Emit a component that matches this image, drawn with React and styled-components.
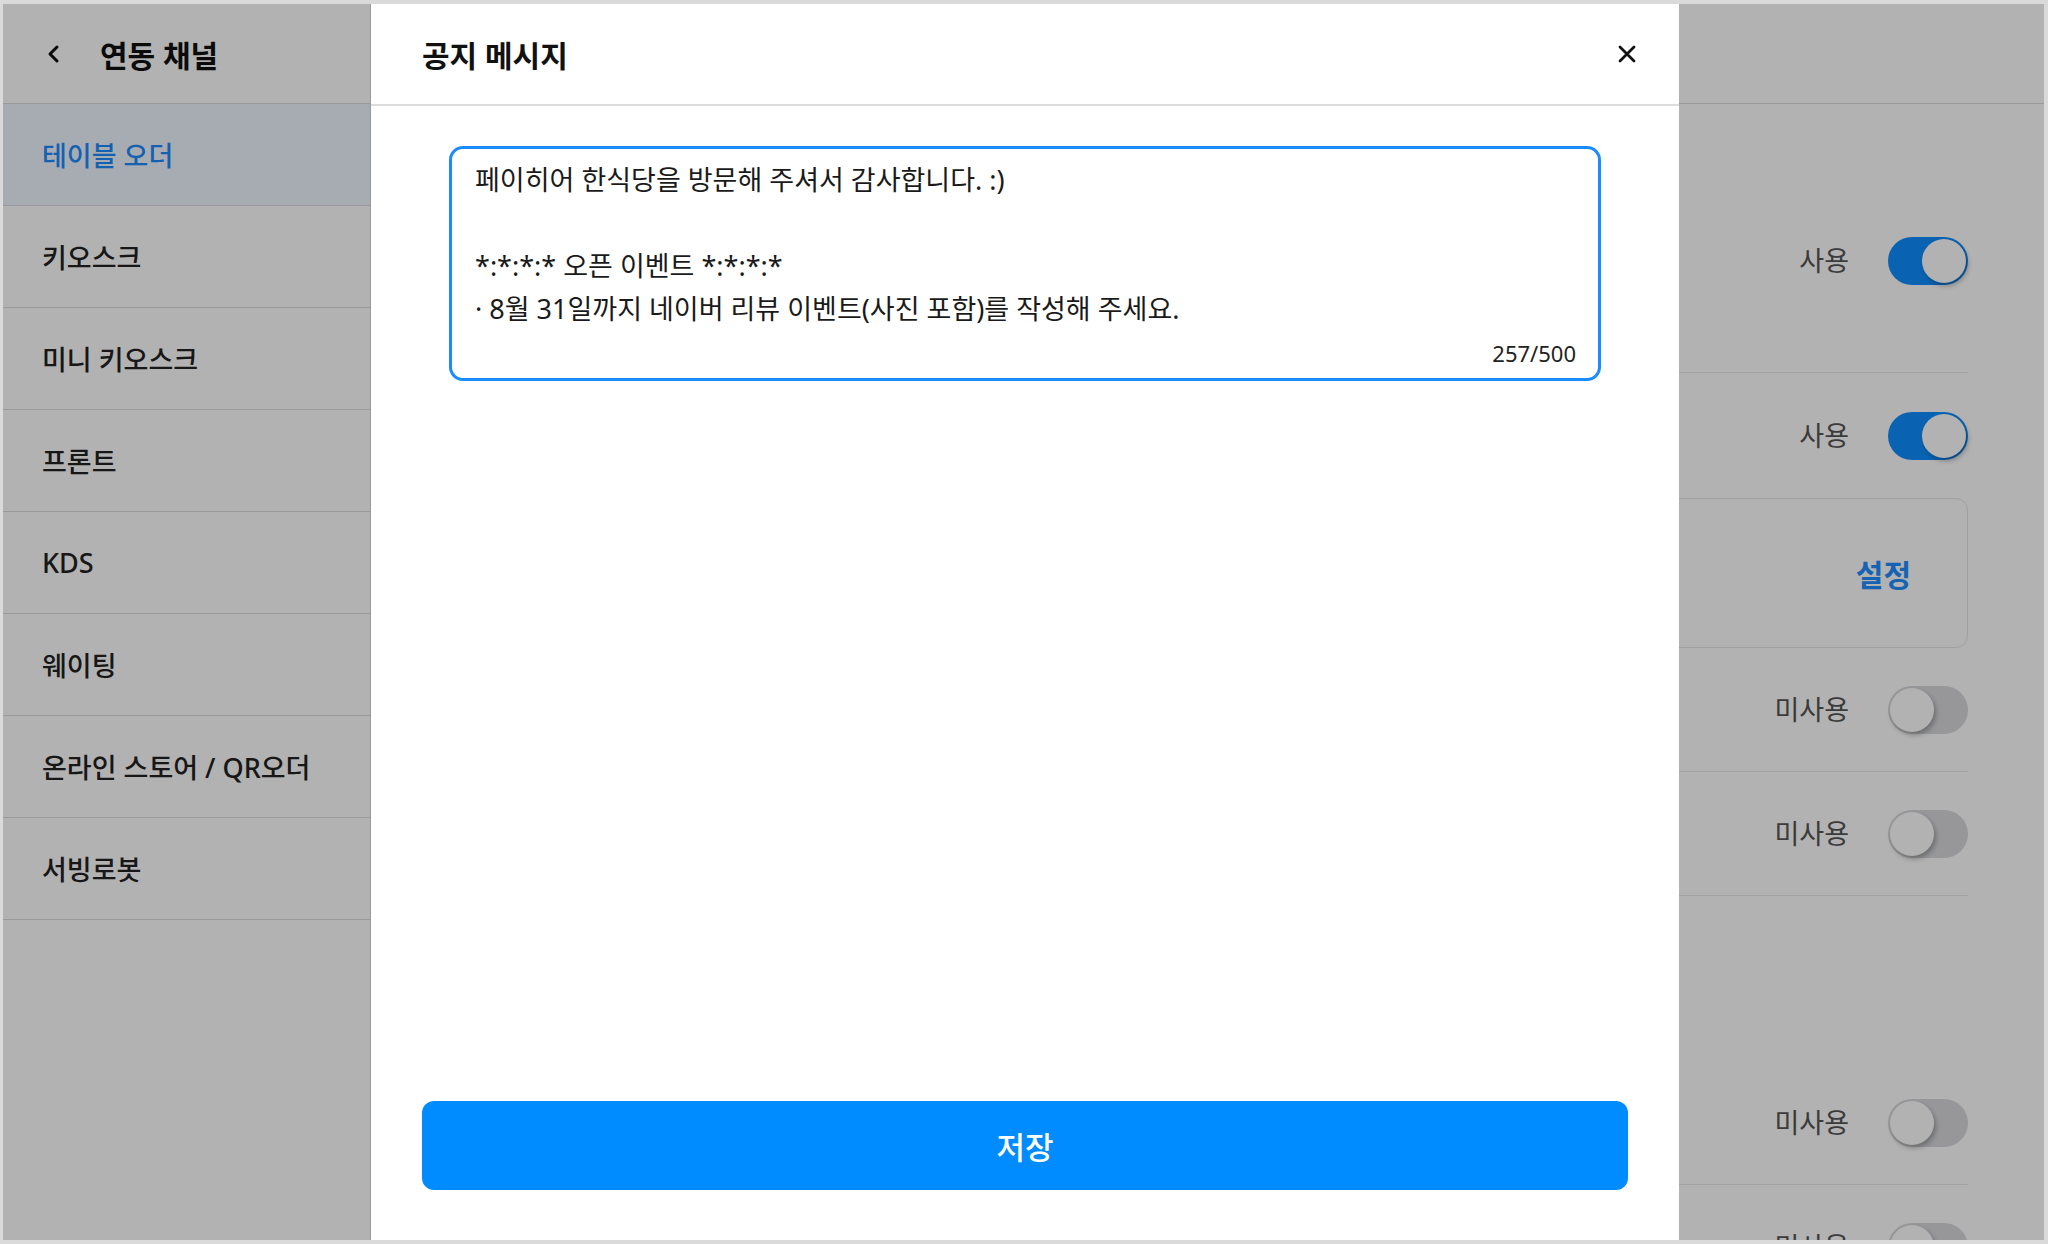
import React from "react";
import styled, { createGlobalStyle } from "styled-components";

const GlobalStyle = createGlobalStyle`
  html, body { margin: 0; padding: 0; }
  body {
    font-family: "Noto Sans", "Noto Sans CJK KR", sans-serif;
    color: #222;
  }
  * { box-sizing: border-box; }
`;

const Frame = styled.div`
  width: 2048px;
  height: 1244px;
  padding: 4px 4px 4px 3px;
  background: #dadada;
`;

const Screen = styled.div`
  position: relative;
  width: 100%;
  height: 100%;
  display: flex;
  background: #fff;
  overflow: hidden;
`;

/* ---------- Sidebar ---------- */
const Sidebar = styled.aside`
  width: 368px;
  flex-shrink: 0;
  display: flex;
  flex-direction: column;
  border-right: 1px solid #dbdbdb;
`;

const SideHeader = styled.div`
  height: 100px;
  display: flex;
  align-items: center;
  gap: 39px;
  padding-left: 42px;
  border-bottom: 1px solid #dbdbdb;
`;

const BackButton = styled.button`
  display: flex;
  align-items: center;
  padding: 0;
  border: 0;
  background: none;
  color: #111;
`;

const SideTitle = styled.h1`
  margin: 0;
  font-size: 30px;
  font-weight: 700;
  color: #111;
`;

const NavItem = styled.div`
  height: 102px;
  display: flex;
  align-items: center;
  padding-left: 39px;
  font-size: 27px;
  font-weight: 500;
  border-bottom: 1px solid #dbdbdb;
  background: ${(p) => (p.$active ? "#f0f7ff" : "#fff")};
  color: ${(p) => (p.$active ? "#1e8cff" : "#222")};
`;

/* ---------- Main page (behind modal) ---------- */
const Main = styled.main`
  flex: 1;
  display: flex;
  flex-direction: column;
  min-width: 0;
`;

const MainHeader = styled.div`
  height: 100px;
  flex-shrink: 0;
  border-bottom: 1px solid #dbdbdb;
`;

const Settings = styled.div`
  display: flex;
  flex-direction: column;
  padding: 0 76px;
`;

const Row = styled.div`
  height: ${(p) => p.$h}px;
  flex-shrink: 0;
  display: flex;
  justify-content: flex-end;
  align-items: ${(p) => (p.$top ? "flex-start" : "center")};
  padding-top: ${(p) => p.$top || 0}px;
  gap: 39px;
  border-bottom: ${(p) => (p.$line ? "1px solid #e8e8e8" : "none")};
`;

const SectionGap = styled.div`
  height: ${(p) => p.$h}px;
  flex-shrink: 0;
`;

const StatusLabel = styled.span`
  font-size: 27px;
  color: #555;
  line-height: 48px;
`;

const Track = styled.span`
  position: relative;
  width: 80px;
  height: 48px;
  border-radius: 24px;
  flex-shrink: 0;
  background: ${(p) => (p.$on ? "#0e8fff" : "#d8d9dd")};
`;

const Knob = styled.span`
  position: absolute;
  top: 2px;
  left: ${(p) => (p.$on ? "34px" : "2px")};
  width: 44px;
  height: 44px;
  border-radius: 50%;
  background: #fff;
  box-shadow: 2px 3px 5px rgba(0, 0, 0, 0.28);
`;

const SettingBox = styled.div`
  height: 150px;
  flex-shrink: 0;
  display: flex;
  justify-content: flex-end;
  align-items: center;
  padding-right: 56px;
  border: 1px solid #e6e6e6;
  border-radius: 12px;
`;

const LinkButton = styled.button`
  padding: 0;
  border: 0;
  background: none;
  font-family: inherit;
  font-size: 30px;
  font-weight: 700;
  color: #1f8fff;
`;

/* ---------- Overlay + Modal ---------- */
const Overlay = styled.div`
  position: absolute;
  inset: 0;
  background: rgba(0, 0, 0, 0.3);
`;

const Modal = styled.section`
  position: absolute;
  top: 0;
  bottom: 0;
  left: 368px;
  width: 1308px;
  display: flex;
  flex-direction: column;
  background: #fff;
`;

const ModalHeader = styled.header`
  height: 102px;
  flex-shrink: 0;
  display: flex;
  align-items: center;
  justify-content: space-between;
  padding: 0 40px 0 51px;
  border-bottom: 2px solid #dcdcdc;
`;

const ModalTitle = styled.h2`
  margin: 0;
  font-size: 30px;
  font-weight: 700;
  color: #111;
`;

const CloseButton = styled.button`
  width: 24px;
  height: 24px;
  display: flex;
  align-items: center;
  justify-content: center;
  padding: 0;
  border: 0;
  background: none;
  color: #111;
`;

const ModalBody = styled.div`
  flex: 1;
  padding: 40px 78px 0;
`;

const NoticeBox = styled.div`
  height: 235px;
  display: flex;
  flex-direction: column;
  padding: 9px 22px 10px 23px;
  border: 3px solid #1a8cff;
  border-radius: 14px;
`;

const NoticeText = styled.div`
  height: 172px;
  font-size: 27px;
  line-height: 43px;
  color: #1a1a1a;
  white-space: pre-wrap;
  overflow: hidden;
`;

const Counter = styled.div`
  margin-top: 8px;
  text-align: right;
  font-size: 22px;
  line-height: 30px;
  color: #222;
`;

const ModalFooter = styled.footer`
  padding: 0 51px 50px;
`;

const SaveButton = styled.button`
  width: 100%;
  height: 89px;
  border: 0;
  border-radius: 12px;
  background: #008cff;
  color: #fff;
  font-family: inherit;
  font-size: 31px;
  font-weight: 500;
`;

const Toggle = ({ on }) => (
  <Track $on={on}>
    <Knob $on={on} />
  </Track>
);

const navItems = [
  "테이블 오더",
  "키오스크",
  "미니 키오스크",
  "프론트",
  "KDS",
  "웨이팅",
  "온라인 스토어 / QR오더",
  "서빙로봇",
];

const notice =
  "페이히어 한식당을 방문해 주셔서 감사합니다. :)\n\n*:*:*:* 오픈 이벤트 *:*:*:*\n· 8월 31일까지 네이버 리뷰 이벤트(사진 포함)를 작성해 주세요.";

export default function App() {
  return (
    <>
      <GlobalStyle />
      <Frame>
        <Screen>
          <Sidebar>
            <SideHeader>
              <BackButton aria-label="뒤로">
                <svg width="16" height="20" viewBox="0 0 16 20" fill="none">
                  <polyline
                    points="12,3 5,10 12,17"
                    stroke="currentColor"
                    strokeWidth="3"
                    strokeLinecap="round"
                    strokeLinejoin="round"
                  />
                </svg>
              </BackButton>
              <SideTitle>연동 채널</SideTitle>
            </SideHeader>
            {navItems.map((item, i) => (
              <NavItem key={item} $active={i === 0}>
                {item}
              </NavItem>
            ))}
          </Sidebar>

          <Main>
            <MainHeader />
            <Settings>
              <Row $h={269} $top={133} $line>
                <StatusLabel>사용</StatusLabel>
                <Toggle on />
              </Row>
              <Row $h={125}>
                <StatusLabel>사용</StatusLabel>
                <Toggle on />
              </Row>
              <SettingBox>
                <LinkButton>설정</LinkButton>
              </SettingBox>
              <Row $h={124} $line>
                <StatusLabel>미사용</StatusLabel>
                <Toggle />
              </Row>
              <Row $h={124} $line>
                <StatusLabel>미사용</StatusLabel>
                <Toggle />
              </Row>
              <SectionGap $h={166} />
              <Row $h={123} $line>
                <StatusLabel>미사용</StatusLabel>
                <Toggle />
              </Row>
              <Row $h={124} $line>
                <StatusLabel>미사용</StatusLabel>
                <Toggle />
              </Row>
            </Settings>
          </Main>

          <Overlay />

          <Modal role="dialog" aria-label="공지 메시지">
            <ModalHeader>
              <ModalTitle>공지 메시지</ModalTitle>
              <CloseButton aria-label="닫기">
                <svg width="20" height="20" viewBox="0 0 20 20" fill="none">
                  <path
                    d="M3 3L17 17M17 3L3 17"
                    stroke="currentColor"
                    strokeWidth="2.8"
                    strokeLinecap="round"
                  />
                </svg>
              </CloseButton>
            </ModalHeader>
            <ModalBody>
              <NoticeBox>
                <NoticeText>{notice}</NoticeText>
                <Counter>257/500</Counter>
              </NoticeBox>
            </ModalBody>
            <ModalFooter>
              <SaveButton>저장</SaveButton>
            </ModalFooter>
          </Modal>
        </Screen>
      </Frame>
    </>
  );
}
